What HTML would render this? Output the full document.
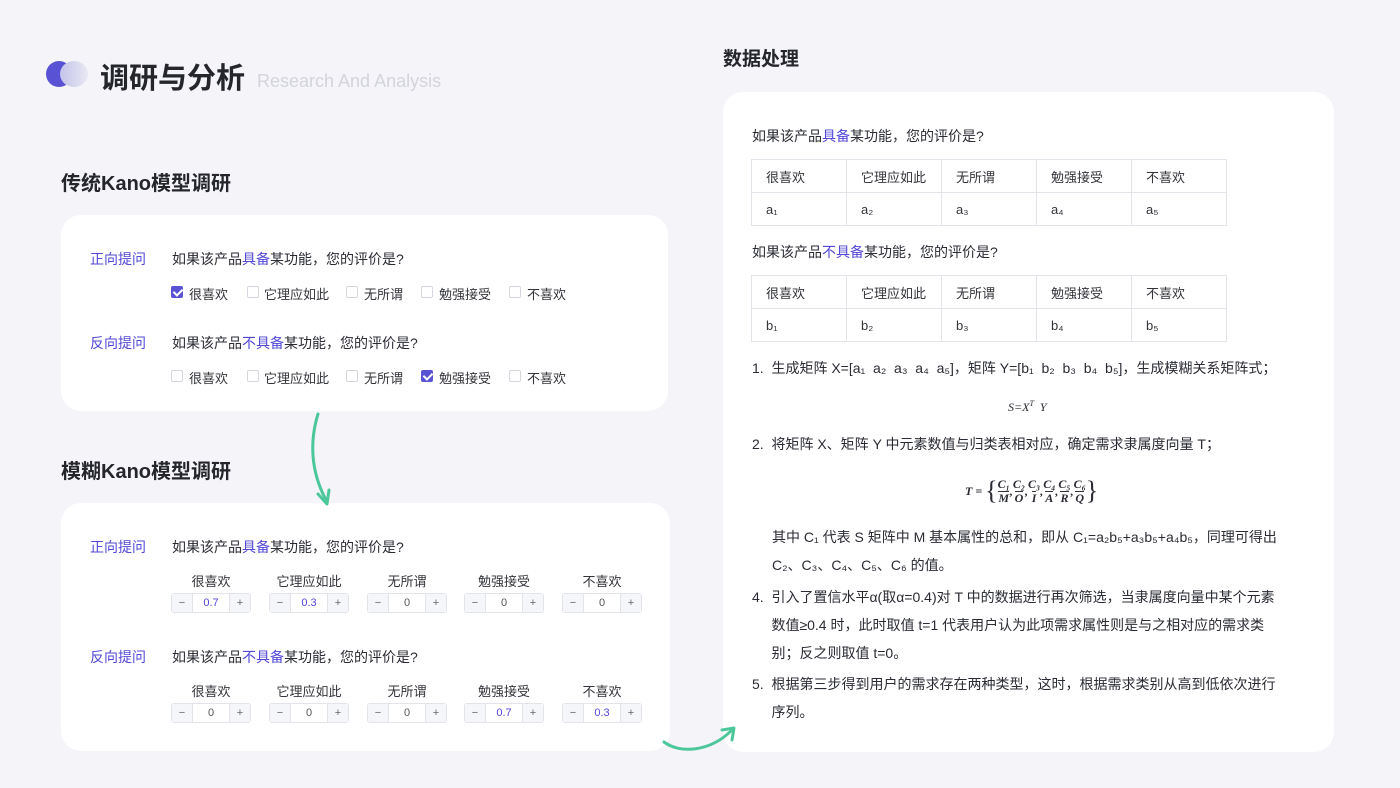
<!DOCTYPE html>
<html><head><meta charset="utf-8"><style>
*{margin:0;padding:0;box-sizing:border-box}
body{width:1400px;height:788px;background:#f4f4f9;position:relative;overflow:hidden;font-family:"Liberation Sans","Noto Sans CJK SC",sans-serif;color:#2a2b33}
.a{position:absolute;white-space:nowrap}
.card{position:absolute;background:#fff;border-radius:20px}
.b{color:#5148d6}
.h2{font-size:20px;font-weight:bold;color:#25262c}
.t14{font-size:14px}
.t13{font-size:13px;color:#34353b}
.cb{position:absolute;width:12px;height:12px;border:1px solid #d6d7de;border-radius:2px;background:#fff}
.cb.on{background:#5a52d5;border-color:#5a52d5}
.cb.on:after{content:"";position:absolute;left:3px;top:0px;width:4px;height:7px;border:solid #fff;border-width:0 2px 2px 0;transform:rotate(45deg)}
.st{position:absolute;width:80px;height:20px;border:1px solid #e3e4ea;border-radius:3px;display:flex;font-size:11px;color:#555}
.st span{display:flex;align-items:center;justify-content:center}
.st .m,.st .p{width:20px;background:#f5f6f9;color:#666}
.st .v{flex:1;border-left:1px solid #e3e4ea;border-right:1px solid #e3e4ea}
.lab{position:absolute;width:80px;text-align:center;font-size:13px;color:#34353b}
table{position:absolute;border-collapse:collapse;font-size:13px;color:#34353b}
td{border:1px solid #e3e4ea;width:95px;height:33px;padding-left:14px}
.li{font-size:14px;line-height:28px;color:#2a2b33}
.fr{display:inline-flex;flex-direction:column;align-items:center;font-size:12px;line-height:13px}
.fr span+span{border-top:1px solid #333}
</style></head><body>
<div class="a" style="left:46px;top:61px;width:26px;height:26px;border-radius:50%;background:#5a52d5"></div>
<div class="a" style="left:60px;top:61px;width:28px;height:26px;border-radius:50%;background:linear-gradient(90deg,#c4c3ea,#e9e9f3)"></div>
<div class="a" style="left:100px;top:55px;font-size:29px;font-weight:bold;color:#25262c">调研与分析</div>
<div class="a" style="left:257px;top:71px;font-size:18px;color:#d3d4dc">Research And Analysis</div>

<div class="a h2" style="left:61px;top:167px">传统Kano模型调研</div>
<div class="card" style="left:61px;top:215px;width:607px;height:196px"></div>
<div class="a t14 b" style="left:90px;top:249px">正向提问</div>
<div class="a t14" style="left:172px;top:249px">如果该产品<span class="b">具备</span>某功能，您的评价是?</div>
<div class="cb on" style="left:171px;top:286px"></div><div class="a t13" style="left:189px;top:284px">很喜欢</div>
<div class="cb" style="left:247px;top:286px"></div><div class="a t13" style="left:264px;top:284px">它理应如此</div>
<div class="cb" style="left:346px;top:286px"></div><div class="a t13" style="left:364px;top:284px">无所谓</div>
<div class="cb" style="left:421px;top:286px"></div><div class="a t13" style="left:439px;top:284px">勉强接受</div>
<div class="cb" style="left:509px;top:286px"></div><div class="a t13" style="left:527px;top:284px">不喜欢</div>
<div class="a t14 b" style="left:90px;top:333px">反向提问</div>
<div class="a t14" style="left:172px;top:333px">如果该产品<span class="b">不具备</span>某功能，您的评价是?</div>
<div class="cb" style="left:171px;top:370px"></div><div class="a t13" style="left:189px;top:368px">很喜欢</div>
<div class="cb" style="left:247px;top:370px"></div><div class="a t13" style="left:264px;top:368px">它理应如此</div>
<div class="cb" style="left:346px;top:370px"></div><div class="a t13" style="left:364px;top:368px">无所谓</div>
<div class="cb on" style="left:421px;top:370px"></div><div class="a t13" style="left:439px;top:368px">勉强接受</div>
<div class="cb" style="left:509px;top:370px"></div><div class="a t13" style="left:527px;top:368px">不喜欢</div>

<div class="a h2" style="left:61px;top:455px">模糊Kano模型调研</div>
<div class="card" style="left:61px;top:503px;width:609px;height:248px"></div>
<div class="a t14 b" style="left:90px;top:537px">正向提问</div>
<div class="a t14" style="left:172px;top:537px">如果该产品<span class="b">具备</span>某功能，您的评价是?</div>
<div class="lab" style="left:171px;top:571px">很喜欢</div><div class="lab" style="left:269px;top:571px">它理应如此</div><div class="lab" style="left:367px;top:571px">无所谓</div><div class="lab" style="left:464px;top:571px">勉强接受</div><div class="lab" style="left:562px;top:571px">不喜欢</div>
<div class="st" style="left:171px;top:593px"><span class="m">−</span><span class="v b">0.7</span><span class="p">+</span></div>
<div class="st" style="left:269px;top:593px"><span class="m">−</span><span class="v b">0.3</span><span class="p">+</span></div>
<div class="st" style="left:367px;top:593px"><span class="m">−</span><span class="v">0</span><span class="p">+</span></div>
<div class="st" style="left:464px;top:593px"><span class="m">−</span><span class="v">0</span><span class="p">+</span></div>
<div class="st" style="left:562px;top:593px"><span class="m">−</span><span class="v">0</span><span class="p">+</span></div>
<div class="a t14 b" style="left:90px;top:647px">反向提问</div>
<div class="a t14" style="left:172px;top:647px">如果该产品<span class="b">不具备</span>某功能，您的评价是?</div>
<div class="lab" style="left:171px;top:681px">很喜欢</div><div class="lab" style="left:269px;top:681px">它理应如此</div><div class="lab" style="left:367px;top:681px">无所谓</div><div class="lab" style="left:464px;top:681px">勉强接受</div><div class="lab" style="left:562px;top:681px">不喜欢</div>
<div class="st" style="left:171px;top:703px"><span class="m">−</span><span class="v">0</span><span class="p">+</span></div>
<div class="st" style="left:269px;top:703px"><span class="m">−</span><span class="v">0</span><span class="p">+</span></div>
<div class="st" style="left:367px;top:703px"><span class="m">−</span><span class="v">0</span><span class="p">+</span></div>
<div class="st" style="left:464px;top:703px"><span class="m">−</span><span class="v b">0.7</span><span class="p">+</span></div>
<div class="st" style="left:562px;top:703px"><span class="m">−</span><span class="v b">0.3</span><span class="p">+</span></div>

<div class="a" style="left:723px;top:44px;font-size:19px;font-weight:bold;color:#25262c">数据处理</div>
<div class="card" style="left:723px;top:92px;width:611px;height:660px"></div>
<div class="a t14" style="left:752px;top:126px">如果该产品<span class="b">具备</span>某功能，您的评价是?</div>
<table style="left:751px;top:159px"><tr><td>很喜欢</td><td>它理应如此</td><td>无所谓</td><td>勉强接受</td><td>不喜欢</td></tr><tr><td>a₁</td><td>a₂</td><td>a₃</td><td>a₄</td><td>a₅</td></tr></table>
<div class="a t14" style="left:752px;top:242px">如果该产品<span class="b">不具备</span>某功能，您的评价是?</div>
<table style="left:751px;top:275px"><tr><td>很喜欢</td><td>它理应如此</td><td>无所谓</td><td>勉强接受</td><td>不喜欢</td></tr><tr><td>b₁</td><td>b₂</td><td>b₃</td><td>b₄</td><td>b₅</td></tr></table>
<div class="a li" style="left:752px;top:354px">1.&nbsp; 生成矩阵 X=[a₁&nbsp; a₂&nbsp; a₃&nbsp; a₄&nbsp; a₅]，矩阵 Y=[b₁&nbsp; b₂&nbsp; b₃&nbsp; b₄&nbsp; b₅]，生成模糊关系矩阵式；</div>
<div class="a" style="left:1008px;top:399px;font-family:'Liberation Serif',serif;font-style:italic;font-size:12px">S=X<sup style="font-size:8px">T</sup>&nbsp; Y</div>
<div class="a li" style="left:752px;top:430px">2.&nbsp; 将矩阵 X、矩阵 Y 中元素数值与归类表相对应，确定需求隶属度向量 T；</div>
<div class="a" style="left:965px;top:476px;font-family:'Liberation Serif',serif;font-style:italic;font-weight:bold;font-size:12px;display:flex;align-items:center">T =&nbsp;<span style="font-size:26px;font-style:normal;font-weight:normal">{</span><span class="fr"><span>C₁</span><span>M</span></span>,<span class="fr"><span>C₂</span><span>O</span></span>,<span class="fr"><span>C₃</span><span>I</span></span>,<span class="fr"><span>C₄</span><span>A</span></span>,<span class="fr"><span>C₅</span><span>R</span></span>,<span class="fr"><span>C₆</span><span>Q</span></span><span style="font-size:26px;font-style:normal;font-weight:normal">}</span></div>
<div class="a li" style="left:772px;top:523px">其中 C₁ 代表 S 矩阵中 M 基本属性的总和，即从 C₁=a₂b₅+a₃b₅+a₄b₅，同理可得出<br>C₂、C₃、C₄、C₅、C₆ 的值。</div>
<div class="a li" style="left:752px;top:583px">4.&nbsp; 引入了置信水平α(取α=0.4)对 T 中的数据进行再次筛选，当隶属度向量中某个元素<br>&nbsp;&nbsp;&nbsp;&nbsp; 数值≥0.4 时，此时取值 t=1 代表用户认为此项需求属性则是与之相对应的需求类<br>&nbsp;&nbsp;&nbsp;&nbsp; 别；反之则取值 t=0。</div>
<div class="a li" style="left:752px;top:670px">5.&nbsp; 根据第三步得到用户的需求存在两种类型，这时，根据需求类别从高到低依次进行<br>&nbsp;&nbsp;&nbsp;&nbsp; 序列。</div>

<svg class="a" style="left:300px;top:410px" width="40" height="100"><path d="M18 4 C10 30 10 60 26 90" stroke="#4cc79a" stroke-width="3" fill="none" stroke-linecap="round"/><path d="M18 84 L27 94 L29 80" stroke="#4cc79a" stroke-width="3" fill="none" stroke-linecap="round" stroke-linejoin="round"/></svg>
<svg class="a" style="left:660px;top:722px" width="80" height="32"><path d="M4 20 C20 32 50 30 72 8" stroke="#4cc79a" stroke-width="3" fill="none" stroke-linecap="round"/><path d="M62 8 L74 6 L72 18" stroke="#4cc79a" stroke-width="3" fill="none" stroke-linecap="round" stroke-linejoin="round"/></svg>
</body></html>
